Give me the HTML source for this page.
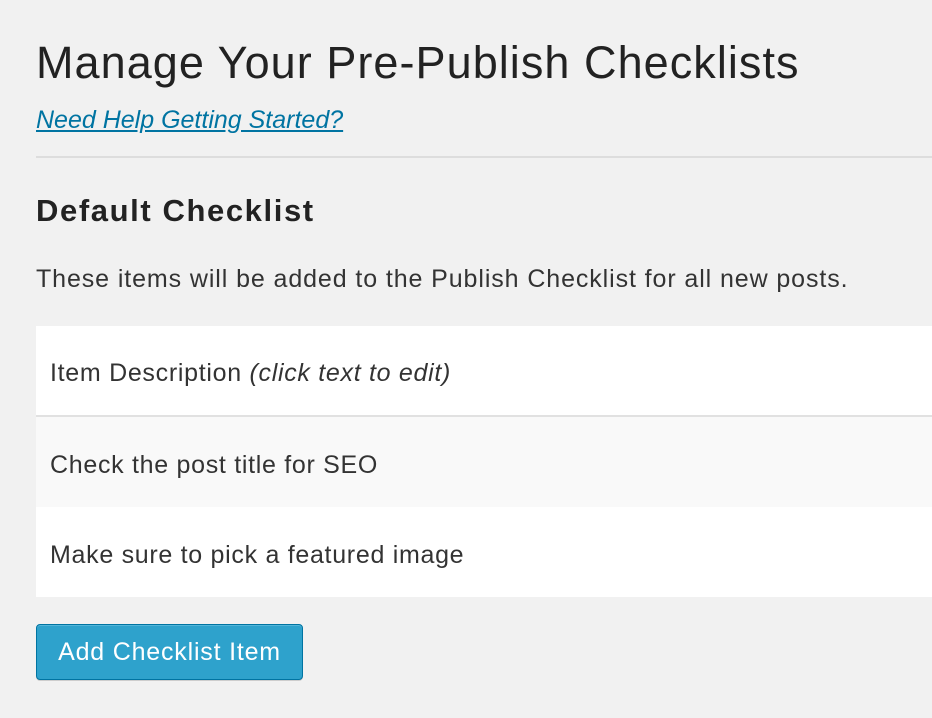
<!DOCTYPE html>
<html><head><style>
body{margin:0;width:932px;height:718px;background:#f1f1f1;font-family:"Liberation Sans",sans-serif;color:#222;overflow:hidden;position:relative}
.a{position:absolute;white-space:nowrap}
h1{position:absolute;left:36px;top:35px;margin:0;font-size:45px;font-weight:normal;line-height:56px;color:#222;letter-spacing:1.05px;white-space:nowrap}
.link{left:36px;top:106px;font-size:25px;font-style:italic;color:#0074a2;text-decoration:underline}
.hr{position:absolute;left:36px;right:0;top:156px;height:2px;background:#ddd}
h2{position:absolute;left:36px;top:191px;margin:0;font-size:31px;font-weight:bold;line-height:40px;color:#222;letter-spacing:1.6px;white-space:nowrap}
.p{left:36px;top:265px;font-size:25px;color:#333;letter-spacing:0.9px}
.row{position:absolute;left:36px;right:0;height:90px;line-height:96px;font-size:25px;color:#333;padding-left:14px;box-sizing:border-box;letter-spacing:0.7px;white-space:nowrap}
.btn{position:absolute;left:36px;top:624px;width:267px;height:56px;box-sizing:border-box;background:#2ea2cc;border:1px solid #0074a2;border-radius:4px;box-shadow:inset 0 1px 0 rgba(120,200,230,.5),0 1px 0 rgba(0,0,0,.15);color:#fff;font-size:25px;line-height:54px;text-align:center;letter-spacing:0.8px}
</style></head><body>
<h1>Manage Your Pre-Publish Checklists</h1>
<div class="a link">Need Help Getting Started?</div>
<div class="hr"></div>
<h2>Default Checklist</h2>
<div class="a p">These items will be added to the Publish Checklist for all new posts.</div>
<div class="row" style="top:326px;height:89px;line-height:94px;background:#fff">Item Description <i>(click text to edit)</i></div>
<div style="position:absolute;left:36px;right:0;top:415px;height:2px;background:#e1e1e1"></div>
<div class="row" style="top:417px;background:#f9f9f9">Check the post title for SEO</div>
<div class="row" style="top:507px;background:#fff">Make sure to pick a featured image</div>
<div class="btn">Add Checklist Item</div>
</body></html>
